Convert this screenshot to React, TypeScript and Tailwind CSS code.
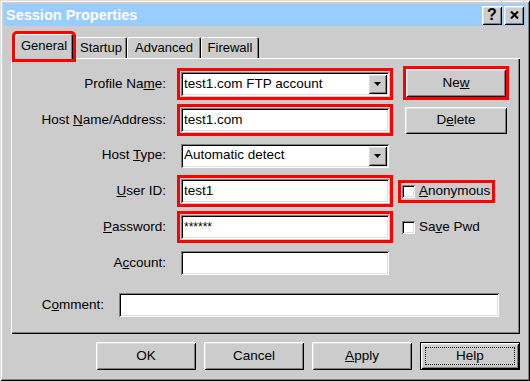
import React from "react";

const raised =
  "bg-[#cccccc] shadow-[inset_1px_1px_0_#fff,inset_-1px_-1px_0_#000,inset_2px_2px_0_#dfdfdf,inset_-2px_-2px_0_#808080]";
const sunken =
  "bg-white shadow-[inset_1px_1px_0_#808080,inset_-1px_-1px_0_#fff,inset_2px_2px_0_#000,inset_-2px_-2px_0_#dfdfdf]";
const red = "outline-[3px] outline-solid outline-[#ff0000]";

function Field({
  text,
  w,
  combo,
  redBox,
  small,
}: {
  text?: string;
  w: string;
  combo?: boolean;
  redBox?: boolean;
  small?: boolean;
}) {
  return (
    <div
      className={`${sunken} ${w} h-[24px] flex items-stretch p-[2px] ${
        redBox ? red + " outline-offset-[1px]" : ""
      }`}
    >
      <div
        className={`flex-1 flex pl-[1px] whitespace-nowrap overflow-hidden ${
          small ? "text-[12px] items-start pt-[1px]" : "items-center"
        }`}
      >
        {text}
      </div>
      {combo && (
        <div className={`${raised} w-[19px] flex items-center justify-center`}>
          <svg width="7" height="4" viewBox="0 0 7 4">
            <polygon points="0,0 7,0 3.5,4" fill="#000" />
          </svg>
        </div>
      )}
    </div>
  );
}

function Label({ children, w }: { children: React.ReactNode; w: string }) {
  return <div className={`${w} text-right whitespace-nowrap`}>{children}</div>;
}

function CheckBox() {
  return <div className={`${sunken} w-[13px] h-[13px] shrink-0`} />;
}

function Button({
  children,
  w,
  h,
  className = "",
}: {
  children: React.ReactNode;
  w: string;
  h: string;
  className?: string;
}) {
  return (
    <div className={`${raised} ${w} ${h} flex items-center justify-center ${className}`}>
      {children}
    </div>
  );
}

export default function App() {
  return (
    <div className="w-[530px] h-[381px] bg-[#cccccc] p-[4px] flex flex-col text-[13.5px] text-black font-['Liberation_Sans',Arial,sans-serif] shadow-[inset_1px_1px_0_#dfdfdf,inset_-1px_-1px_0_#000,inset_2px_2px_0_#fff,inset_-2px_-2px_0_#808080]">
      {/* Title bar */}
      <div className="h-[22px] bg-[#99ccff] flex items-center pl-[2px] pr-[2px]">
        <span className="flex-1 text-white font-bold text-[14.5px] leading-none">
          Session Properties
        </span>
        <div className={`${raised} w-[20px] h-[19px] flex items-center justify-center font-bold text-[16px] leading-none`}>
          ?
        </div>
        <div className={`${raised} ml-[2px] w-[20px] h-[19px] flex items-center justify-center`}>
          <svg width="9" height="8" viewBox="0 0 9 8">
            <path d="M1 0.5 L8 7.5 M8 0.5 L1 7.5" stroke="#000" strokeWidth="2" />
          </svg>
        </div>
      </div>

      {/* Tabs */}
      <div className="mt-[8px] ml-[7px] mr-[6px] h-[24px] flex items-end text-[13px]">
        <div
          className={`relative z-10 ml-[4px] w-[58px] h-[25px] -mb-[1px] bg-[#cccccc] flex items-center justify-center pb-[2px] rounded-t-[2px] shadow-[inset_1px_1px_0_#fff,inset_-1px_0_0_#000,inset_-2px_0_0_#808080] ${red} outline-offset-[0px]`}
        >
          General
        </div>
        <div className="ml-[2px] w-[52px] h-[21px] flex items-center justify-center rounded-t-[2px] shadow-[inset_1px_1px_0_#fff,inset_-1px_0_0_#000,inset_-2px_0_0_#808080]">
          Startup
        </div>
        <div className="w-[74px] h-[21px] flex items-center justify-center rounded-t-[2px] shadow-[inset_1px_1px_0_#fff,inset_-1px_0_0_#000,inset_-2px_0_0_#808080]">
          Advanced
        </div>
        <div className="w-[58px] h-[21px] flex items-center justify-center rounded-t-[2px] shadow-[inset_1px_1px_0_#fff,inset_-1px_0_0_#000,inset_-2px_0_0_#808080]">
          Firewall
        </div>
      </div>

      {/* Panel */}
      <div className="ml-[7px] mr-[6px] h-[276px] flex flex-col pt-[8px] shadow-[inset_1px_1px_0_#fff,inset_-1px_-1px_0_#000,inset_-2px_-2px_0_#808080]">
        <div className="h-[36px] flex items-center">
          <Label w="w-[155px]">
            Profile Na<u>m</u>e:
          </Label>
          <div className="ml-[15px]">
            <Field text="test1.com FTP account" w="w-[208px]" combo redBox />
          </div>
          <Button w="w-[100px]" h="h-[28px]" className={`ml-[17px] -mt-[2px] ${red} outline-offset-[0px]`}>
            Ne<u>w</u>
          </Button>
        </div>

        <div className="h-[36px] flex items-center">
          <Label w="w-[155px]">
            Host <u>N</u>ame/Address:
          </Label>
          <div className="ml-[15px]">
            <Field text="test1.com" w="w-[208px]" redBox />
          </div>
          <Button w="w-[102px]" h="h-[27px]" className="ml-[16px]">
            D<u>e</u>lete
          </Button>
        </div>

        <div className="h-[35px] flex items-center">
          <Label w="w-[155px]">
            Host <u>T</u>ype:
          </Label>
          <div className="ml-[15px]">
            <Field text="Automatic detect" w="w-[208px]" combo />
          </div>
        </div>

        <div className="h-[36px] flex items-center">
          <Label w="w-[155px]">
            <u>U</u>ser ID:
          </Label>
          <div className="ml-[15px]">
            <Field text="test1" w="w-[208px]" redBox />
          </div>
          <div className={`ml-[12px] px-[1px] h-[17px] flex items-center gap-[4px] ${red} outline-offset-[0px]`}>
            <CheckBox />
            <span className="pr-[1px]">
              <u>A</u>nonymous
            </span>
          </div>
        </div>

        <div className="h-[36px] flex items-center">
          <Label w="w-[155px]">
            <u>P</u>assword:
          </Label>
          <div className="ml-[15px]">
            <Field text="******" w="w-[208px]" redBox small />
          </div>
          <div className="ml-[13px] flex items-center gap-[4px]">
            <CheckBox />
            <span>
              Sa<u>v</u>e Pwd
            </span>
          </div>
        </div>

        <div className="h-[36px] flex items-center">
          <Label w="w-[155px]">
            A<u>c</u>count:
          </Label>
          <div className="ml-[15px]">
            <Field w="w-[208px]" />
          </div>
        </div>

        <div className="mt-[12px] h-[24px] flex items-center">
          <Label w="w-[93px]">
            C<u>o</u>mment:
          </Label>
          <div className="ml-[15px]">
            <Field w="w-[380px]" />
          </div>
        </div>
      </div>

      {/* Bottom buttons */}
      <div className="mt-[8px] mr-[6px] flex justify-end gap-[8px]">
        <Button w="w-[100px]" h="h-[28px]">OK</Button>
        <Button w="w-[100px]" h="h-[28px]">Cancel</Button>
        <Button w="w-[100px]" h="h-[28px]">
          <u>A</u>pply
        </Button>
        <div className="relative w-[100px] h-[28px] border border-black">
          <div className={`${raised} w-full h-full flex items-center justify-center`}>Help</div>
          <div className="absolute inset-[4px] border border-dotted border-black" />
        </div>
      </div>
    </div>
  );
}
